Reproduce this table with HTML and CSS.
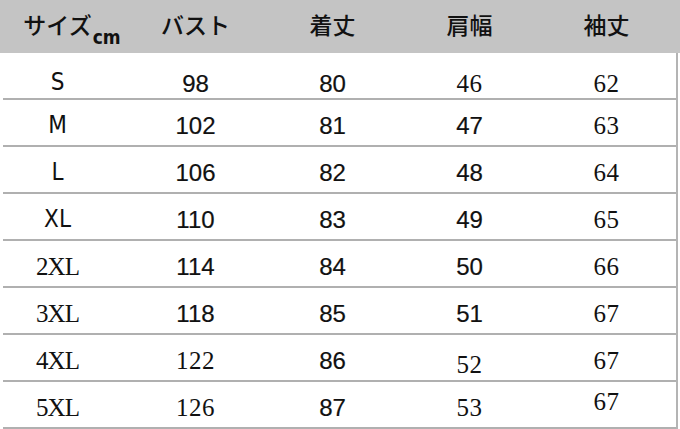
FILE: index.html
```html
<!DOCTYPE html>
<html lang="ja">
<head>
<meta charset="utf-8">
<link rel="stylesheet" href="styles.css">
</head>
<body>
<div class="chart">
  <div class="head">
    <div class="grid">
      <div class="hc first">サイズ<span class="unit">cm</span></div>
      <div class="hc">バスト</div>
      <div class="hc">着丈</div>
      <div class="hc">肩幅</div>
      <div class="hc">袖丈</div>
    </div>
  </div>
  <div class="body">
    <div class="grid row top">
      <div class="c first n">S</div><div class="c s">98</div><div class="c s">80</div><div class="c m">46</div><div class="c m">62</div>
    </div>
    <div class="grid row">
      <div class="c first n">M</div><div class="c s">102</div><div class="c s">81</div><div class="c s">47</div><div class="c m">63</div>
    </div>
    <div class="grid row">
      <div class="c first n">L</div><div class="c s">106</div><div class="c s">82</div><div class="c s">48</div><div class="c m">64</div>
    </div>
    <div class="grid row">
      <div class="c first n">XL</div><div class="c s">110</div><div class="c s">83</div><div class="c s">49</div><div class="c m">65</div>
    </div>
    <div class="grid row">
      <div class="c first m">2XL</div><div class="c s">114</div><div class="c s">84</div><div class="c s">50</div><div class="c m">66</div>
    </div>
    <div class="grid row">
      <div class="c first m">3XL</div><div class="c s">118</div><div class="c s">85</div><div class="c s">51</div><div class="c m">67</div>
    </div>
    <div class="grid row">
      <div class="c first m">4XL</div><div class="c m">122</div><div class="c s">86</div><div class="c m low">52</div><div class="c m">67</div>
    </div>
    <div class="grid row">
      <div class="c first m">5XL</div><div class="c m">126</div><div class="c s">87</div><div class="c m">53</div><div class="c m high">67</div>
    </div>
  </div>
</div>
</body>
</html>
```
FILE: styles.css
```css
html, body {
  margin: 0;
  padding: 0;
  background: #fff;
}
.chart {
  width: 680px;
  height: 429px;
  overflow: hidden;
  color: #111;
}
.grid {
  display: grid;
  grid-template-columns: 124px repeat(4, 137px);
}
.head {
  background: #c4c4c4;
  height: 53px;
  padding-left: 3px;
  box-sizing: border-box;
}
.head .grid {
  height: 53px;
  align-items: center;
}
.hc {
  font-family: "Noto Sans CJK JP", sans-serif;
  font-weight: 500;
  font-size: 23px;
  text-align: center;
  line-height: 1;
  margin-top: -4px;
}
.hc.first {
  padding-left: 14px;
  white-space: nowrap;
}
.unit {
  font-family: "DejaVu Sans", sans-serif;
  font-stretch: condensed;
  font-weight: bold;
  font-size: 19px;
  position: relative;
  top: 10px;
  margin-left: 1px;
}
.body {
  margin-left: 3px;
  width: 675px;
  border-right: 2px solid #b4b4b4;
  box-sizing: border-box;
}
.row {
  height: 47px;
  box-sizing: border-box;
  border-bottom: 2px solid #b0b0b0;
  align-items: center;
}
.c {
  text-align: center;
  line-height: 1;
  padding-top: 6px;
}
.top .c {
  padding-top: 16px;
}
.top .c.n {
  padding-top: 12px;
}
.c.first {
  padding-right: 15px;
}
.c.n {
  font-family: "DejaVu Sans", sans-serif;
  font-stretch: condensed;
  font-size: 24px;
  padding-top: 4px;
}
.s {
  font-family: "Liberation Sans", sans-serif;
  font-size: 24px;
  -webkit-text-stroke: 0.2px #111;
}
.m {
  font-family: "Liberation Serif", serif;
  font-size: 25px;
  letter-spacing: 0.5px;
}
.first.m {
  letter-spacing: -1px;
}
.c.low {
  padding-top: 14px;
}
.c.high {
  padding-top: 0;
  margin-top: -6px;
}
```
